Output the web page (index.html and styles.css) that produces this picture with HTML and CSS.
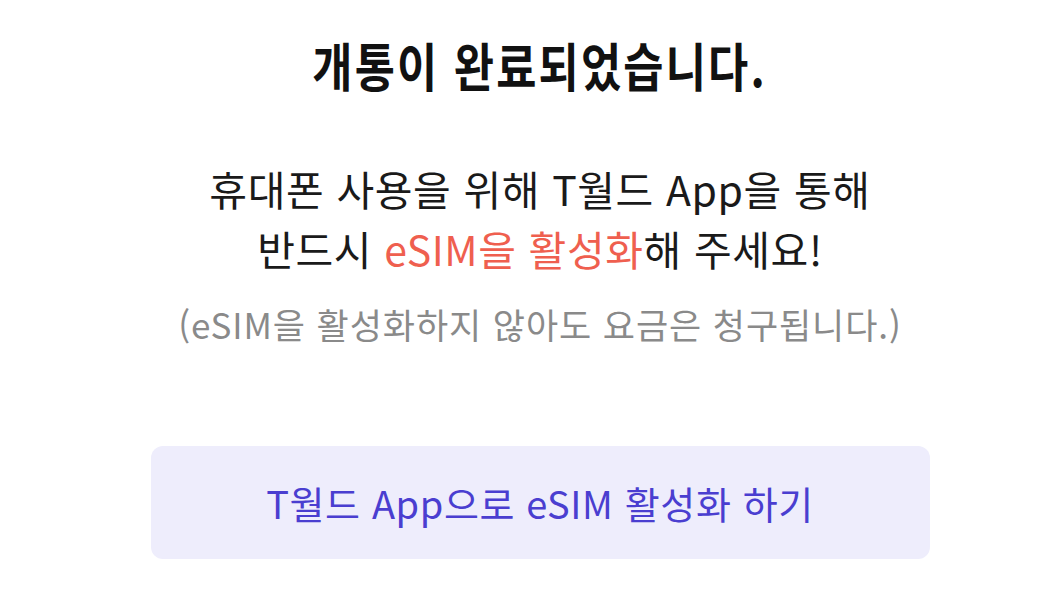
FILE: index.html
```html
<!DOCTYPE html>
<html lang="ko">
<head>
<meta charset="utf-8">
<link rel="stylesheet" href="styles.css">
</head>
<body>
<main class="page">
  <h1 class="title"><span class="squeeze-title">개통이 완료되었습니다.</span></h1>
  <p class="message">
    <span class="line">휴대폰 사용을 위해 T월드 App을 통해</span><br>
    <span class="line">반드시 <em class="accent">eSIM을 활성화</em>해 주세요!</span>
  </p>
  <p class="note">(eSIM을 활성화하지 않아도 요금은 청구됩니다.)</p>
  <button class="cta" type="button">T월드 App으로 eSIM 활성화 하기</button>
</main>
</body>
</html>
```

FILE: styles.css
```css
html, body {
  margin: 0;
  padding: 0;
  background: #ffffff;
}

body {
  font-family: "Noto Sans CJK KR", "Noto Sans", sans-serif;
  color: #111111;
}

.page {
  width: 1052px;
  height: 598px;
  display: flex;
  flex-direction: column;
  align-items: center;
  box-sizing: border-box;
  padding: 35px 0 0 28px;
}

.title {
  margin: 0;
  font-size: 52px;
  font-weight: 700;
  line-height: 60px;
  text-align: center;
  color: #111111;
}

.squeeze-title {
  display: inline-block;
  white-space: nowrap;
  transform-origin: center;
  transform: scaleX(0.84);
  letter-spacing: 2.6px;
}

.message {
  margin: 63px 0 0;
  font-size: 41px;
  font-weight: 400;
  line-height: 60px;
  text-align: center;
  color: #1a1a1a;
  letter-spacing: 0.6px;
}

.line {
  white-space: nowrap;
}

.accent {
  font-style: normal;
  color: #ef5f4f;
}

.note {
  margin: 24px 0 0;
  font-size: 35px;
  line-height: 44px;
  text-align: center;
  color: #8a8a8a;
  letter-spacing: 0.9px;
  white-space: nowrap;
}

.cta {
  margin-top: 100px;
  width: 779px;
  height: 113px;
  border: none;
  border-radius: 12px;
  background: #eeedfc;
  color: #4a3ed0;
  font-family: inherit;
  font-size: 38px;
  font-weight: 400;
  letter-spacing: 0.6px;
  display: flex;
  align-items: center;
  justify-content: center;
  white-space: nowrap;
}
```
